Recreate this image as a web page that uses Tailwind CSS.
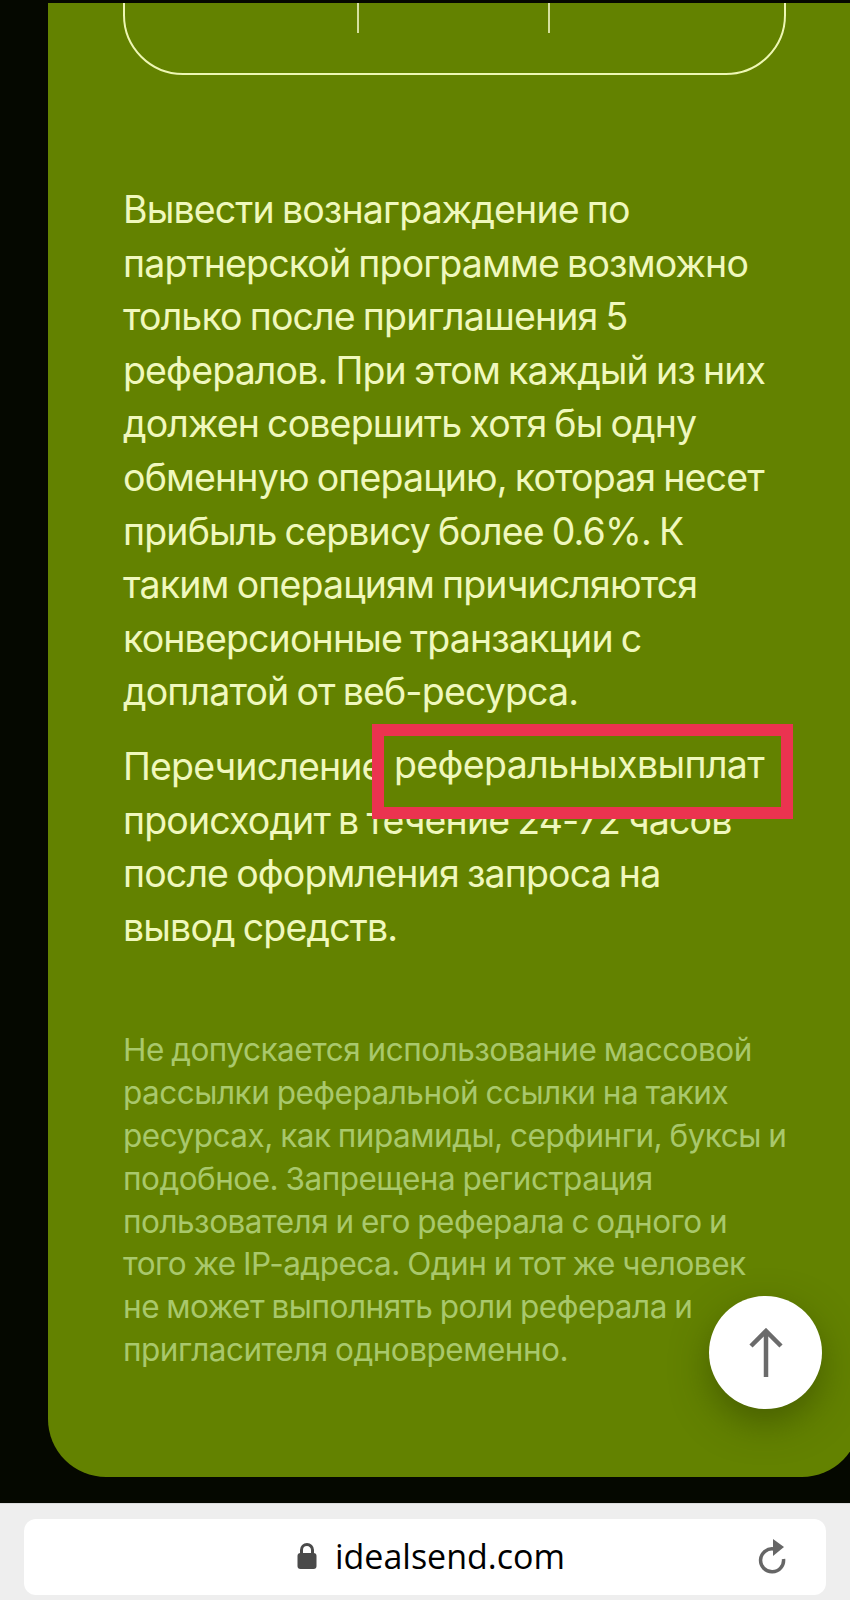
<!DOCTYPE html>
<html lang="ru">
<head>
<meta charset="utf-8">
<script src="https://cdn.jsdelivr.net/npm/@tailwindcss/browser@4"></script>
</head>
<body class="m-0 w-[850px] h-[1600px] overflow-hidden bg-[#050800] font-['Inter',sans-serif]">
<div class="relative h-[1600px] w-[850px] overflow-hidden flex flex-col">
  <main class="mt-[3px] ml-[48px] w-[812px] h-[1474px] shrink-0 overflow-hidden rounded-b-[58px] bg-[#638200] pl-[75px]">
    <div class="-mt-[78px] h-[150px] w-[663px] rounded-[60px] border-2 border-[#eef7b4] pl-[232px] flex items-start">
      <span class="w-[2px] h-[106px] bg-[#d5e0a0]"></span>
      <span class="ml-[189px] w-[2px] h-[106px] bg-[#d5e0a0]"></span>
    </div>
    <div class="mt-[108px] w-[700px] text-[37.5px] leading-[53.6px] font-[380] text-[#f0f8bd] tracking-[-0.85px] [word-spacing:-1.7px]">
      <p>Вывести вознаграждение по<br>партнерской программе возможно<br>только после приглашения 5<br>рефералов. При этом каждый из них<br>должен совершить хотя бы одну<br>обменную операцию, которая несет<br>прибыль сервису более 0.6%. К<br>таким операциям причисляются<br>конверсионные транзакции с<br>доплатой от веб-ресурса.</p>
      <p class="mt-[21px]">Перечисление реферальных выплат<br>происходит в течение 24-72 часов<br>после оформления запроса на<br>вывод средств.</p>
    </div>
    <p class="mt-[75px] w-[720px] text-[31.5px] leading-[42.8px] font-[380] text-[#a9c86c] tracking-[-0.5px] [word-spacing:-1px]">Не допускается использование массовой<br>рассылки реферальной ссылки на таких<br>ресурсах, как пирамиды, серфинги, буксы и<br>подобное. Запрещена регистрация<br>пользователя и его реферала с одного и<br>того же IP-адреса. Один и тот же человек<br>не может выполнять роли реферала и<br>пригласителя одновременно.</p>
  </main>
  <div class="absolute left-[372px] top-[724px] w-[421px] h-[95px] border-[12px] border-[#eb3350] bg-[#638200] pl-[10px] pt-[5px] text-[37.5px] leading-[48px] font-[380] text-[#f0f8bd] tracking-[-0.62px] whitespace-nowrap">реферальныхвыплат</div>
  <button class="absolute left-[709px] top-[1296px] w-[113px] h-[113px] rounded-full bg-white shadow-[0_14px_36px_rgba(50,65,0,0.55)] flex items-center justify-center">
    <svg width="34" height="50" viewBox="0 0 34 50" fill="none" stroke="#6b6b6b" stroke-width="4.500"><path d="M17 49V3M2 18 17 3l15 15"/></svg>
  </button>
  <footer class="mt-[26px] h-[97px] shrink-0 bg-[#eeeeee] border-t border-[#dcdcdc] pt-[15px] px-[24px]">
    <div class="relative h-[76px] w-[802px] rounded-[12px] bg-white flex items-center justify-center">
      <div class="flex items-center gap-[18px] ml-[12px] pb-[3px]">
        <svg width="20" height="26" viewBox="0 0 20 26"><path d="M4.500 12V7a5.500 5.500 0 0 1 11 0V12" fill="none" stroke="#4a4a4a" stroke-width="3"/><rect x="0.500" y="10" width="19" height="16" rx="3" fill="#4a4a4a"/></svg>
        <span class="text-[34px] leading-none text-black font-['Open_Sans',sans-serif]">idealsend.com</span>
      </div>
      <svg class="absolute right-[35px] top-[16px]" width="36" height="40" viewBox="0 0 36 40" fill="none"><path d="M19 14A11.500 11.500 0 1 0 28.500 24" stroke="#666" stroke-width="3.500"/><path d="M18 4 29 12 18 21z" fill="#666"/></svg>
    </div>
  </footer>
</div>
</body>
</html>
